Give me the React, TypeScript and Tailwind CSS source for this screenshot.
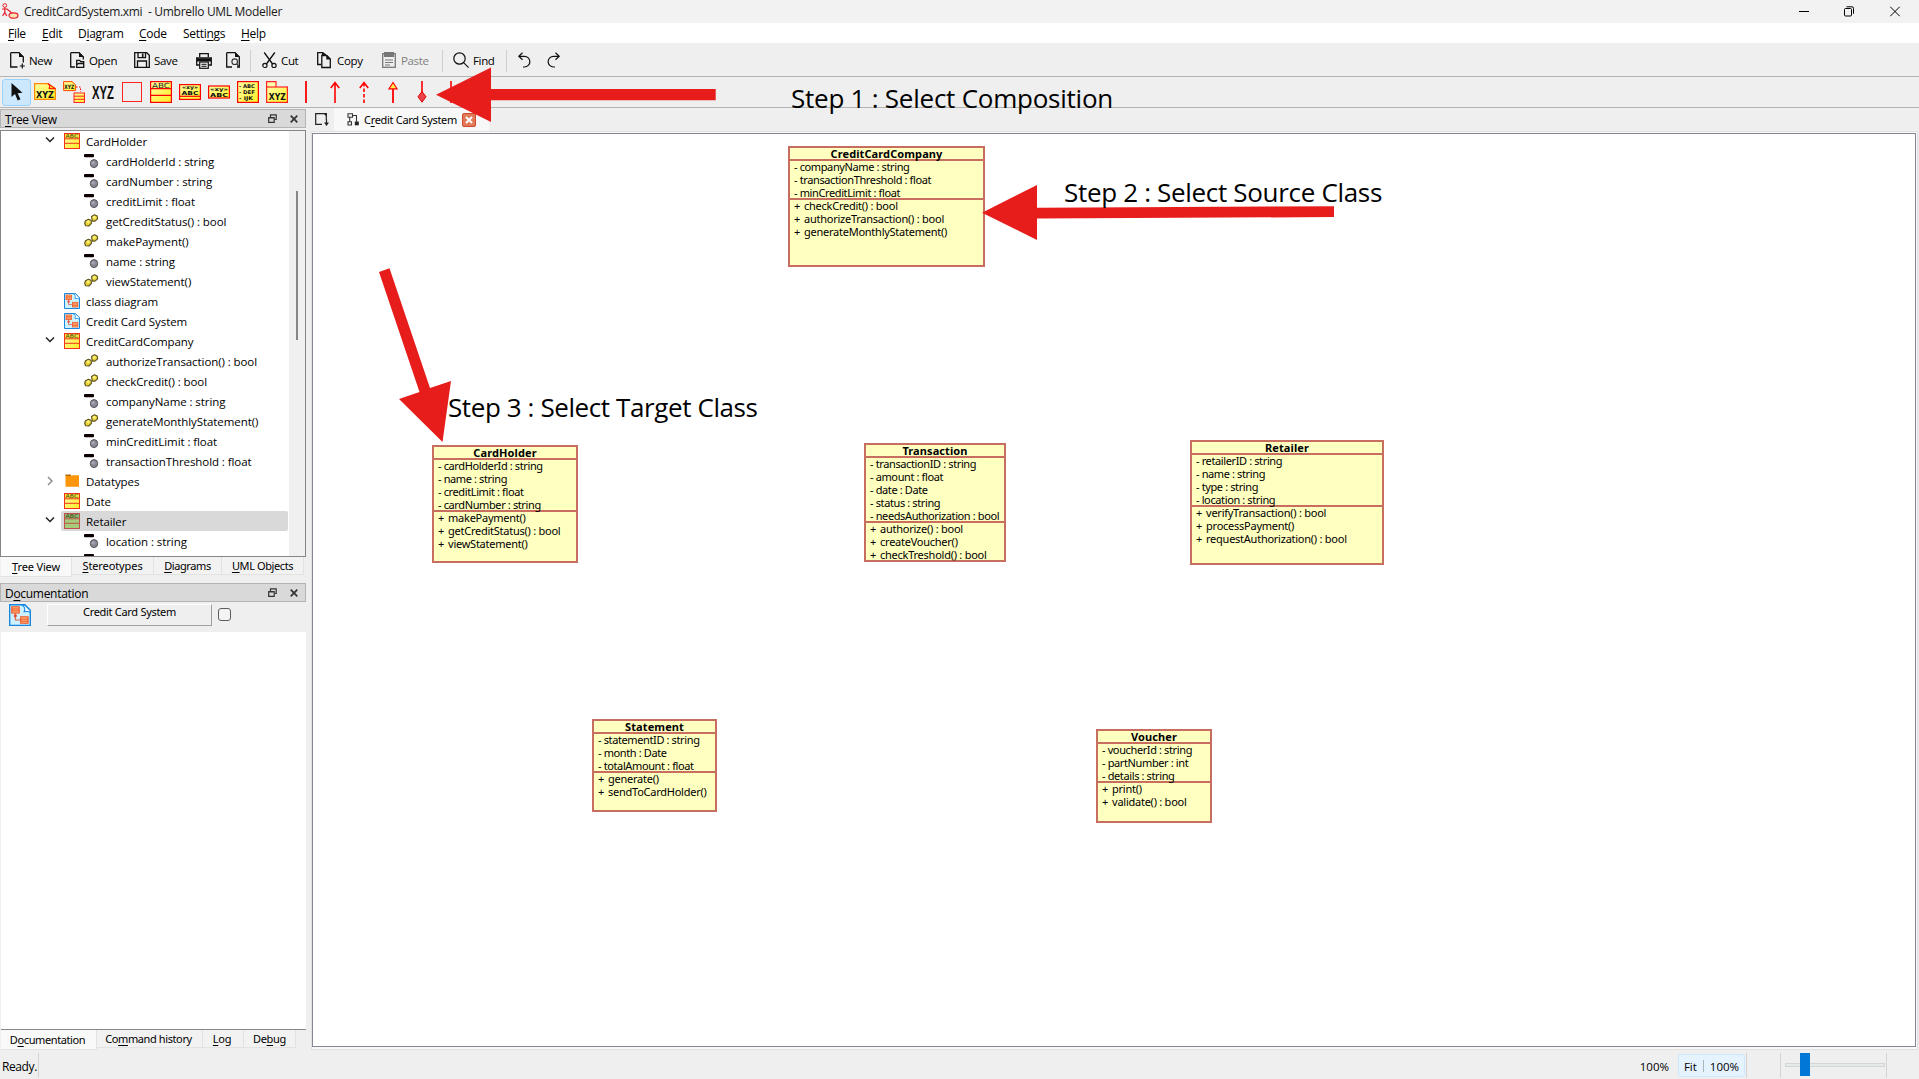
import type { ReactNode } from "react";

const UI = "font-['Open_Sans',sans-serif] text-[11.5px]";

/* ---------- small icons ---------- */

function Svg({ w, h, children, className = "" }: { w: number; h: number; children: ReactNode; className?: string }) {
  return (
    <svg width={w} height={h} viewBox={`0 0 ${w} ${h}`} fill="none" className={`block shrink-0 overflow-visible ${className}`}>
      {children}
    </svg>
  );
}

const Gradient = () => (
  <defs>
    <linearGradient id="yel" x1="0" y1="0" x2="1" y2="1">
      <stop offset="0" stopColor="#ffffa8" />
      <stop offset="1" stopColor="#ffee20" />
    </linearGradient>
  </defs>
);

function ClassIcon({ size = 16, selected = false }: { size?: number; selected?: boolean }) {
  const line = selected ? "#c0504a" : "#f5331c";
  return (
    <svg width={size} height={size} viewBox="0 0 16 16" className="block shrink-0">
      <rect x=".5" y=".5" width="15" height="15" fill={selected ? "#a5cd7c" : "url(#yel)"} stroke={line} />
      <rect x="1" y="1" width="14" height="4.5" fill={selected ? "#8cb878" : "#f2dc3a"} />
      <path d="M.5 5.8h15M.5 10.3h15" stroke={line} strokeWidth="1" />
      <text x="8" y="4.9" textAnchor="middle" fontSize="5.6" fontFamily="DejaVu Sans" textLength="13" lengthAdjust="spacingAndGlyphs" fill="#4a4410">ABC</text>
    </svg>
  );
}

function ToolClassIcon() {
  return (
    <Svg w={22} h={22}>
      <rect x=".6" y=".6" width="20.8" height="20.8" fill="url(#yel)" stroke="#f00" strokeWidth="1.2" />
      <path d="M.5 7.6h21M.5 14.4h21" stroke="#f00" strokeWidth="1.2" />
      <text x="11" y="6.7" textAnchor="middle" fontSize="7" fontFamily="DejaVu Sans" textLength="18" lengthAdjust="spacingAndGlyphs" fill="#222">ABC</text>
    </Svg>
  );
}

function DiagramIcon({ size = 16 }: { size?: number }) {
  return (
    <svg width={size} height={size} viewBox="0 0 16 16" className="block shrink-0">
      <path d="M.5.5h11l4 4v11H.5z" fill="#cdf2fd" stroke="#1787e0" />
      <path d="M9.5.8l2 0 4 4v1.2q-1.5-.8-4.500-.4 1.500-3-1.500-4.800z" fill="#fff" stroke="#1787e0" strokeWidth=".8" />
      <rect x="2" y="2" width="5.400" height="4.600" fill="#ffb27a" stroke="#ef5a2d" strokeWidth=".8" />
      <path d="M2 3.600h5.400M2 5h5.400" stroke="#ef5a2d" strokeWidth=".7" />
      <path d="M4.600 6.600v5h4" stroke="#e0604a" strokeWidth=".8" fill="none" />
      <circle cx="4.600" cy="8.600" r="1.200" fill="#ef4a2d" />
      <rect x="8.500" y="9.300" width="5.400" height="4.700" fill="#ffb27a" stroke="#ef5a2d" strokeWidth=".8" />
      <path d="M8.500 11h5.400M8.500 12.500h5.400" stroke="#ef5a2d" strokeWidth=".7" />
    </svg>
  );
}

const AttrIcon = () => (
  <Svg w={16} h={20}>
    <rect x="0" y="3" width="10" height="3.200" rx="1" fill="#0c0000" />
    <ellipse cx="10" cy="12.600" rx="3.700" ry="4" fill="#8b8894" stroke="#56545c" strokeWidth="1" />
    <ellipse cx="9.200" cy="11.800" rx="1.800" ry="1.600" fill="#a6a3b2" />
  </Svg>
);

const OpIcon = () => (
  <Svg w={16} h={20}>
    <path d="M7.500 5.500l3-1.700 2.700 1.200.4 2.800-2.600 2.300-2.600 0z" fill="#e8cf35" stroke="#5a5220" strokeWidth="1.100" strokeLinejoin="round" />
    <path d="M1.300 10l3-1.700 2.800 1 .4 3-2.700 2.700-3.200-.3-.9-2.200z" fill="#e8cf35" stroke="#5a5220" strokeWidth="1.100" strokeLinejoin="round" />
    <circle cx="10.300" cy="6.300" r="1.500" fill="#fff27a" />
    <circle cx="4.200" cy="10.800" r="1.500" fill="#fff27a" />
  </Svg>
);

const FolderIcon = () => (
  <Svg w={16} h={16}>
    <path d="M1.500 1.500h5.500v2h-5.500z" fill="#b06a10" />
    <path d="M1.500 3h5.500l1-.8h7v11.600h-13.500z" fill="#fb960a" />
  </Svg>
);

const pg = "M.7.7h8.300l4.300 4.300";

const NewIcon = () => (
  <Svg w={16} h={17}>
    <path d={`${pg}v5.500M7.500 15H.7V.7`} stroke="#111" strokeWidth="1.300" />
    <path d="M9 0v5h5z" fill="#111" />
    <path d="M12.300 11.500v5M9.800 14h5" stroke="#111" strokeWidth="1.200" />
  </Svg>
);
const OpenIcon = () => (
  <Svg w={16} h={17}>
    <path d={`${pg}v2.500M5 15H.7V.7`} stroke="#111" strokeWidth="1.300" />
    <path d="M9 0v5h5z" fill="#111" />
    <path d="M6.700 15.400v-7h3l1 1.200h3v5.800zM7 12.500l1.500-1h5" stroke="#111" strokeWidth="1.300" />
  </Svg>
);
const SaveIcon = () => (
  <Svg w={16} h={17}>
    <path d="M.7.700h12l2.600 2.600v12H.7zM4 .7v5h7.500v-5M3.500 15.300V9h9v6.300" stroke="#111" strokeWidth="1.300" />
    <path d="M8.700 1.500v3.500" stroke="#111" strokeWidth="1.600" />
  </Svg>
);
const PrintIcon = () => (
  <Svg w={16} h={16}>
    <path d="M3.700 4V.7h8.600V4M3.500 12H.7V5h14.600v7h-2.800" stroke="#111" strokeWidth="1.300" />
    <path d="M1 5.500h14v3H1z" fill="#111" />
    <rect x="3.700" y="9" width="8.600" height="6.300" fill="#efefef" stroke="#111" strokeWidth="1.200" />
    <path d="M5.500 11.300h5M5.500 13.300h5" stroke="#111" />
  </Svg>
);
const PreviewIcon = () => (
  <Svg w={16} h={17}>
    <path d={`${pg}v10H11M6 15H.7V.7`} stroke="#111" strokeWidth="1.300" />
    <path d="M9 0v5h5z" fill="#111" />
    <circle cx="8.700" cy="9.700" r="2.800" stroke="#333" strokeWidth="1.100" />
    <path d="M10.700 11.900l3 3.600" stroke="#333" strokeWidth="1.200" />
  </Svg>
);
const CutIcon = () => (
  <Svg w={15} h={17}>
    <path d="M2.200.500l8.400 11.500M12.800.500L4.400 12" stroke="#111" strokeWidth="1.300" />
    <circle cx="2.900" cy="13.400" r="2.100" stroke="#111" strokeWidth="1.200" />
    <circle cx="12" cy="13.400" r="2.100" stroke="#111" strokeWidth="1.200" />
  </Svg>
);
const CopyIcon = () => (
  <Svg w={15} h={17}>
    <path d="M4 12.500H.7V.7h5l3 2M4.800 3.500h5l3.500 3.500v8.500H4.800z" stroke="#111" strokeWidth="1.300" />
    <path d="M5 .3l3.500 2.800H5zM9.300 3v4.500h4.500z" fill="#111" />
  </Svg>
);
const PasteIcon = () => (
  <Svg w={15} h={17}>
    <rect x=".7" y="1.700" width="12.600" height="13.600" stroke="#777" strokeWidth="1.300" />
    <path d="M2 0h10v5H2z" fill="#777" />
    <path d="M3 8h8M3 10.500h8M3 13h5" stroke="#777" strokeWidth="1.100" />
  </Svg>
);
const FindIcon = () => (
  <Svg w={17} h={17}>
    <circle cx="6.500" cy="6.500" r="5.700" stroke="#111" strokeWidth="1.200" />
    <path d="M10.600 10.600l5 5" stroke="#111" strokeWidth="1.200" />
  </Svg>
);
const UndoIcon = () => (
  <Svg w={13} h={17}>
    <path d="M4.500.800L.8 4.300l3.700 3.500M1 4.300h5.500a5.300 5.300 0 0 1 0 10.700H5" stroke="#111" strokeWidth="1.200" />
  </Svg>
);
const RedoIcon = () => (
  <Svg w={13} h={17} className="-scale-x-100">
    <path d="M4.500.800L.8 4.300l3.700 3.500M1 4.300h5.500a5.300 5.300 0 0 1 0 10.700H5" stroke="#111" strokeWidth="1.200" />
  </Svg>
);

/* ---------- bars ---------- */

/* Label with its mnemonic letter underlined */
function Mn({ t, i }: { t: string; i: number }) {
  return (
    <span className="whitespace-pre">
      {t.slice(0, i)}
      <span className="underline decoration-1 underline-offset-2">{t[i]}</span>
      {t.slice(i + 1)}
    </span>
  );
}

function TitleBar() {
  return (
    <div className="flex h-[23px] items-center bg-[#f2f2f2] pl-[2px]">
      <Svg w={17} h={17}>
        <circle cx="2.800" cy="2.500" r="1.900" stroke="#e8202a" />
        <path d="M2.800 4.400v5M0 6h5.500M2.800 9.400L.6 13M2.800 9.400l2 3.600M5 6l6 5" stroke="#e8202a" strokeWidth="1.200" />
        <ellipse cx="11.500" cy="12.500" rx="4.500" ry="2.700" fill="#fbe3b4" stroke="#e8202a" strokeWidth="1.200" />
      </Svg>
      <span className="ml-[5px] whitespace-pre pt-px text-[12px] tracking-[-0.3px] text-[#1a1a1a]">CreditCardSystem.xmi  - Umbrello UML Modeller</span>
      <div className="ml-auto flex items-center pr-[19px] text-black">
        <Svg w={10} h={11} className="mr-[35px]"><path d="M0 5.500h10" stroke="currentColor" /></Svg>
        <Svg w={10} h={11} className="mr-[36px]">
          <rect x=".5" y="2.500" width="7" height="7.500" rx="1" stroke="currentColor" />
          <path d="M2.500.8h5.500q1.500 0 1.500 1.500v5.500" stroke="currentColor" />
        </Svg>
        <Svg w={10} h={11}><path d="M.3.800l9.400 9.400M9.700.800L.3 10.200" stroke="currentColor" /></Svg>
      </div>
    </div>
  );
}

function MenuBar() {
  return (
    <div className="flex h-[22px] items-center border-b-2 border-[#f0f0f0] bg-white pl-[8px] pt-[2px] text-[12px] tracking-[-0.3px]">
      <span className="w-[34px]"><Mn t="File" i={0} /></span>
      <span className="w-[36px]"><Mn t="Edit" i={0} /></span>
      <span className="w-[61px]"><Mn t="Diagram" i={1} /></span>
      <span className="w-[44px]"><Mn t="Code" i={0} /></span>
      <span className="w-[58px]"><Mn t="Settings" i={5} /></span>
      <span><Mn t="Help" i={0} /></span>
    </div>
  );
}

function Action({ icon, label, className }: { icon: ReactNode; label?: string; className: string }) {
  return (
    <div className={`flex shrink-0 items-center tracking-[-0.35px] ${className}`}>
      {icon}
      {label && <span className="pt-px">{label}</span>}
    </div>
  );
}

const Sep = ({ className }: { className: string }) => <div className={`h-[22px] w-px shrink-0 bg-[#cfcfcf] ${className}`} />;

function MainToolbar() {
  return (
    <div className="flex h-[32px] items-center border-b border-[#b4b4b4] pl-[10px]">
      <Action className="w-[60px] gap-[3px]" icon={<NewIcon />} label="New" />
      <Action className="w-[64px] gap-[3px]" icon={<OpenIcon />} label="Open" />
      <Action className="w-[62px] gap-[4px]" icon={<SaveIcon />} label="Save" />
      <Action className="w-[30px]" icon={<PrintIcon />} />
      <Action className="w-[24px]" icon={<PreviewIcon />} />
      <Sep className="mr-[11px]" />
      <Action className="w-[55px] gap-[4px]" icon={<CutIcon />} label="Cut" />
      <Action className="w-[65px] gap-[5px]" icon={<CopyIcon />} label="Copy" />
      <Action className="w-[60px] gap-[4px] text-[#808080]" icon={<PasteIcon />} label="Paste" />
      <Sep className="mr-[10px]" />
      <Action className="w-[53px] gap-[3px]" icon={<FindIcon />} label="Find" />
      <Sep className="mr-[11px]" />
      <Action className="w-[29px]" icon={<UndoIcon />} />
      <Action className="w-[29px]" icon={<RedoIcon />} />
    </div>
  );
}

const Tool = ({ children }: { children: ReactNode }) => (
  <div className="flex h-[27px] w-[29px] shrink-0 items-center justify-center">{children}</div>
);

function DiagramToolbar() {
  const bold = { fontFamily: "DejaVu Sans", fontWeight: 700, lengthAdjust: "spacingAndGlyphs" as const, fill: "#111" };
  return (
    <div className="flex h-[31px] items-center border-b border-[#b4b4b4] pl-[2px]">
      <div className="-mr-px flex h-[27px] w-[29px] items-center justify-center rounded-[3px] border border-[#99d1ff] bg-[#cce8ff]">
        <Svg w={14} h={20}><path d="M1.500 1v14l3.500-3 2.700 6.500 2.800-1.300-2.900-6 4.900-.4z" fill="#111" /></Svg>
      </div>
      <Tool>
        <Svg w={22} h={22}>
          <path d="M.6 2.600h13.400l7.400 5v10.800H.6z" fill="url(#yel)" stroke="#f80" strokeWidth="1.200" />
          <path d="M14 2.600q3 2 1 5l6.400.2z" fill="#f8d020" stroke="#f00" />
          <text x="11" y="16.700" textAnchor="middle" fontSize="9" textLength="18" {...bold}>XYZ</text>
        </Svg>
      </Tool>
      <Tool>
        <Svg w={22} h={22}>
          <path d="M.6 .6h8.400l3.400 3v6H.6z" fill="url(#yel)" stroke="#f40" />
          <text x="6.300" y="8.300" textAnchor="middle" fontSize="6" textLength="10" {...bold}>XYZ</text>
          <path d="M13 6h4.500v5" stroke="#f00" strokeDasharray="1.500 1.500" />
          <rect x="11" y="12" width="10.500" height="9.500" fill="url(#yel)" stroke="#f22" />
          <path d="M11 15.200h10.500M11 18.300h10.500" stroke="#f22" />
        </Svg>
      </Tool>
      <Tool>
        <Svg w={24} h={22}><text x="12" y="17.500" textAnchor="middle" fontSize="18" fontFamily="Liberation Sans" fontWeight={700} textLength="22" lengthAdjust="spacingAndGlyphs" fill="#111">XYZ</text></Svg>
      </Tool>
      <Tool><div className="h-[20px] w-[20px] border border-[#f22]" /></Tool>
      <Tool><ToolClassIcon /></Tool>
      <Tool>
        <Svg w={22} h={22}>
          <rect x=".6" y="3.600" width="20.800" height="14.800" fill="url(#yel)" stroke="#f00" strokeWidth="1.200" />
          <text x="11" y="8.400" textAnchor="middle" fontSize="5" textLength="16" {...bold}>«xy»</text>
          <text x="11" y="14" textAnchor="middle" fontSize="5.500" textLength="17" {...bold}>ABC</text>
          <path d="M.5 15.300h21" stroke="#f00" strokeWidth="1.200" />
        </Svg>
      </Tool>
      <Tool>
        <Svg w={22} h={22}>
          <rect x=".6" y="5" width="20.800" height="12" fill="url(#yel)" stroke="#f00" strokeWidth="1.200" />
          <text x="11" y="9.800" textAnchor="middle" fontSize="5" textLength="18" {...bold}>«xy»</text>
          <text x="11" y="15.700" textAnchor="middle" fontSize="5.500" textLength="18" {...bold}>ABC</text>
        </Svg>
      </Tool>
      <Tool>
        <Svg w={22} h={22}>
          <rect x=".6" y=".6" width="20.800" height="20.800" fill="url(#yel)" stroke="#f00" strokeWidth="1.200" />
          <text x="2" y="6.500" fontSize="5" textLength="16" {...bold}>- ABC</text>
          <text x="2" y="12.700" fontSize="5" textLength="16" {...bold}>- DEF</text>
          <text x="2" y="19" fontSize="5" textLength="14" {...bold}>- IJK</text>
        </Svg>
      </Tool>
      <Tool>
        <Svg w={22} h={22}>
          <path d="M.6 6V.6h9.400V6" fill="#ffffb0" stroke="#f22" strokeWidth="1.200" />
          <rect x=".6" y="6" width="20.800" height="15.400" fill="url(#yel)" stroke="#f22" strokeWidth="1.200" />
          <text x="11.300" y="18.500" textAnchor="middle" fontSize="9.500" textLength="17" {...bold}>XYZ</text>
        </Svg>
      </Tool>
      <Tool><Svg w={22} h={22}><path d="M11 0v22" stroke="#f00" strokeWidth="1.800" /></Svg></Tool>
      <Tool><Svg w={22} h={22}><path d="M11 22V1.500M6.800 7L11 1.500 15.200 7" stroke="#f00" strokeWidth="1.600" /></Svg></Tool>
      <Tool><Svg w={22} h={22}><path d="M11 22V2" stroke="#f00" strokeWidth="1.600" strokeDasharray="3.500 2" /><path d="M6.800 7L11 1.500 15.200 7" stroke="#f00" strokeWidth="1.600" /></Svg></Tool>
      <Tool><Svg w={22} h={22}><path d="M11 22V8" stroke="#f00" strokeWidth="1.800" /><path d="M11 1.500l4 6.300H7z" fill="#ffee50" stroke="#f00" strokeWidth="1.200" /></Svg></Tool>
      <Tool><Svg w={22} h={22}><path d="M11 0v12" stroke="#f00" strokeWidth="1.600" /><path d="M11 10.500l4 5.200-4 5.500-4-5.500z" fill="#f0444c" stroke="#e00000" /></Svg></Tool>
      <Tool><Svg w={22} h={22}><path d="M11 0v22" stroke="#f00" strokeWidth="1.600" /></Svg></Tool>
    </div>
  );
}

/* ---------- docks ---------- */

function DockHeader({ t, i }: { t: string; i: number }) {
  return (
    <div className="flex h-[19px] w-[306px] shrink-0 items-center border border-[#b4b4b4] bg-[#d9d9d9] pl-[4px] pr-[7px] text-[12px] tracking-[-0.3px]">
      <span className="pt-[2px]"><Mn t={t} i={i} /></span>
      <Svg w={9} h={9} className="ml-auto">
        <path d="M2.500 3V.8h5.700v4.700H6.500M2 1h6.700" stroke="#333" strokeWidth="1.200" />
        <path d="M.7 3.500h5.500v4.800H.7zM.5 4h6" stroke="#333" strokeWidth="1.200" />
      </Svg>
      <Svg w={8} h={8} className="ml-[13px]"><path d="M.7.700l6.600 6.600M7.300.700L.7 7.300" stroke="#333" strokeWidth="1.700" /></Svg>
    </div>
  );
}

type Node = { k: "class" | "attr" | "op" | "diagram" | "folder"; t: string; open?: boolean; sel?: boolean };

const nodes: Node[] = [
  { k: "class", t: "CardHolder", open: true },
  { k: "attr", t: "cardHolderId : string" },
  { k: "attr", t: "cardNumber : string" },
  { k: "attr", t: "creditLimit : float" },
  { k: "op", t: "getCreditStatus() : bool" },
  { k: "op", t: "makePayment()" },
  { k: "attr", t: "name : string" },
  { k: "op", t: "viewStatement()" },
  { k: "diagram", t: "class diagram" },
  { k: "diagram", t: "Credit Card System" },
  { k: "class", t: "CreditCardCompany", open: true },
  { k: "op", t: "authorizeTransaction() : bool" },
  { k: "op", t: "checkCredit() : bool" },
  { k: "attr", t: "companyName : string" },
  { k: "op", t: "generateMonthlyStatement()" },
  { k: "attr", t: "minCreditLimit : float" },
  { k: "attr", t: "transactionThreshold : float" },
  { k: "folder", t: "Datatypes", open: false },
  { k: "class", t: "Date" },
  { k: "class", t: "Retailer", open: true, sel: true },
  { k: "attr", t: "location : string" },
  { k: "attr", t: "" },
];

function TreeRow({ n }: { n: Node }) {
  const leaf = n.k === "attr" || n.k === "op";
  return (
    <div className="flex h-[20px] shrink-0 items-center">
      <div className="flex w-[60px] shrink-0 justify-center pl-[38px]">
        {n.open === true && <Svg w={10} h={8} className="-mt-[2px]"><path d="M1 1.500l4 4 4-4" stroke="#222" strokeWidth="1.500" /></Svg>}
        {n.open === false && <Svg w={8} h={10}><path d="M2 1l4 4-4 4" stroke="#888" strokeWidth="1.400" /></Svg>}
      </div>
      <div className={`flex h-full items-center rounded-[2px] pl-[3px] ${n.sel ? "w-[227px] bg-[#d9d9d9]" : ""} ${leaf ? "ml-[20px]" : ""}`}>
        {n.k === "class" && <ClassIcon selected={n.sel} />}
        {n.k === "attr" && <AttrIcon />}
        {n.k === "op" && <OpIcon />}
        {n.k === "diagram" && <DiagramIcon />}
        {n.k === "folder" && <FolderIcon />}
        <span className="ml-[6px] whitespace-nowrap pt-[2px] tracking-[-0.08px]">{n.t}</span>
      </div>
    </div>
  );
}

function Tab({ t, i, active = false, className }: { t: string; i: number; active?: boolean; className: string }) {
  return (
    <div className={`flex shrink-0 items-center justify-center border-b border-r border-[#e2e2e2] font-['Noto_Sans',sans-serif] text-[11px] ${active ? "h-[20px] bg-[#f9f9f9] pt-[2px]" : "h-[18px] bg-[#f2f2f2] pt-[2px]"} ${className}`}>
      <Mn t={t} i={i} />
    </div>
  );
}

function LeftDocks() {
  return (
    <div className="flex w-[311px] shrink-0 flex-col pt-px">
      <DockHeader t="Tree View" i={0} />
      <div className="mt-[2px] flex h-[427px] w-[306px] shrink-0 border border-[#868686] bg-white">
        <div className="flex min-w-0 flex-1 flex-col overflow-hidden">
          {nodes.map((n, k) => <TreeRow key={k} n={n} />)}
        </div>
        <div className="flex w-[16px] shrink-0 justify-center bg-[#f0f0f0] pt-[60px]">
          <div className="h-[149px] w-[2px] bg-[#868686]" />
        </div>
      </div>
      <div className="flex h-[26px] shrink-0 items-start pl-px">
        <Tab t="Tree View" i={0} active className="w-[71px] tracking-[-0.15px]" />
        <Tab t="Stereotypes" i={0} className="w-[82px] tracking-[-0.1px]" />
        <Tab t="Diagrams" i={0} className="w-[68px] tracking-[-0.4px]" />
        <Tab t="UML Objects" i={0} className="w-[82px] tracking-[-0.4px]" />
      </div>
      <DockHeader t="Documentation" i={1} />
      <div className="flex h-[30px] shrink-0 items-start pl-[9px] pt-[2px]">
        <DiagramIcon size={22} />
        <div className="ml-[16px] flex h-[22px] w-[165px] justify-center border border-b-[#a0a0a0] border-l-white border-r-[#a0a0a0] border-t-white font-['Noto_Sans',sans-serif] text-[11px] leading-[14px] tracking-[-0.3px]">Credit Card System</div>
        <div className="ml-[6px] mt-[4px] h-[13px] w-[13px] rounded-[3px] border border-[#5c5c5c] bg-[#f4f4f4]" />
      </div>
      <div className="ml-px h-[398px] w-[305px] shrink-0 border-b border-[#868686] bg-white" />
      <div className="flex items-start pl-px">
        <Tab t="Documentation" i={1} active className="w-[96px] pr-[2px] tracking-[-0.4px]" />
        <Tab t="Command history" i={2} className="w-[106px] pr-[2px] tracking-[-0.4px]" />
        <Tab t="Log" i={0} className="w-[41px] pr-[2px] tracking-[-0.3px]" />
        <Tab t="Debug" i={2} className="w-[52px] tracking-[-0.3px]" />
      </div>
    </div>
  );
}

/* ---------- canvas ---------- */

type Uml = { name: string; box: string; attrs: string[]; ops: string[] };

const classes: Uml[] = [
  { name: "CreditCardCompany", box: "left-[475px] top-[12px] w-[197px] h-[121px]", attrs: ["companyName : string", "transactionThreshold : float", "minCreditLimit : float"], ops: ["checkCredit() : bool", "authorizeTransaction() : bool", "generateMonthlyStatement()"] },
  { name: "CardHolder", box: "left-[119px] top-[311px] w-[146px] h-[118px]", attrs: ["cardHolderId : string", "name : string", "creditLimit : float", "cardNumber : string"], ops: ["makePayment()", "getCreditStatus() : bool", "viewStatement()"] },
  { name: "Transaction", box: "left-[551px] top-[309px] w-[142px] h-[119px]", attrs: ["transactionID : string", "amount : float", "date : Date", "status : string", "needsAuthorization : bool"], ops: ["authorize() : bool", "createVoucher()", "checkTreshold() : bool"] },
  { name: "Retailer", box: "left-[877px] top-[306px] w-[194px] h-[125px]", attrs: ["retailerID : string", "name : string", "type : string", "location : string"], ops: ["verifyTransaction() : bool", "processPayment()", "requestAuthorization() : bool"] },
  { name: "Statement", box: "left-[279px] top-[585px] w-[125px] h-[93px]", attrs: ["statementID : string", "month : Date", "totalAmount : float"], ops: ["generate()", "sendToCardHolder()"] },
  { name: "Voucher", box: "left-[783px] top-[595px] w-[116px] h-[94px]", attrs: ["voucherId : string", "partNumber : int", "details : string"], ops: ["print()", "validate() : bool"] },
];

function UmlClass({ c }: { c: Uml }) {
  return (
    <div className={`absolute border-2 border-[#c86e60] bg-[#ffffc0] font-['Noto_Sans',sans-serif] text-[11px] leading-[11px] ${c.box}`}>
      <div className="h-[13px] border-b-2 border-[#c86e60] text-center font-bold leading-[12px] tracking-[0.1px]">{c.name}</div>
      <div className="border-b-2 border-[#c86e60] pl-[4px] tracking-[-0.38px]">
        {c.attrs.map((a, k) => <div key={a} className={`whitespace-nowrap ${k === c.attrs.length - 1 ? "h-[11px]" : "h-[13px]"}`}>- {a}</div>)}
      </div>
      <div className="pl-[4px] tracking-[-0.25px]">
        {c.ops.map((o) => <div key={o} className="flex h-[13px] gap-[4px] whitespace-nowrap"><span>+</span><span>{o}</span></div>)}
      </div>
    </div>
  );
}

function DiagramArea() {
  return (
    <div className="flex min-w-0 flex-1 flex-col">
      <div className="flex h-[23px] shrink-0 items-center pl-[4px]">
        <Svg w={15} h={15}>
          <path d="M11.300 8V1.700H.7v10.600H7" stroke="#222" strokeWidth="1.200" />
          <path d="M8 1h4v4zM9 10.500h5L11.500 14z" fill="#222" />
          <path d="M11.500 7.500v4" stroke="#222" strokeWidth="1.200" />
        </Svg>
        <div className="ml-[4px] flex h-full w-[155px] items-center bg-[#f8f8f8] pl-[13px]">
          <Svg w={12} h={13}>
            <path d="M1 .7h4.500v3.600H1zM1 8.700h3.500v3.300H1zM2.700 4.300v4.400M5.500 2.500H9.500v6" stroke="#333" strokeWidth="1.100" />
            <path d="M7.800 8.500h4v3.800h-4z" fill="#222" />
          </Svg>
          <span className="ml-[5px] w-[93px] whitespace-nowrap pt-[2px] font-['Noto_Sans',sans-serif] text-[11px] tracking-[-0.3px]"><Mn t="Credit Card System" i={1} /></span>
          <span className="ml-[5px] flex h-[14px] w-[14px] items-center justify-center rounded-[2px] border border-[#d04a2c] bg-[#e07a5a]">
            <Svg w={8} h={8}><path d="M1 1l6 6M7 1L1 7" stroke="#fff" strokeWidth="1.900" /></Svg>
          </span>
        </div>
      </div>
      <div className="mr-px flex flex-1 border border-[#e0e0e0] bg-[#f8f8f8] pb-[2px] pr-px pt-px">
        <div className="relative flex-1 overflow-hidden border border-[#868695] bg-white">
          {classes.map((c) => <UmlClass key={c.name} c={c} />)}
        </div>
      </div>
    </div>
  );
}

function StatusBar() {
  return (
    <div className="flex h-[29px] shrink-0 items-center pl-[2px] pt-[2px]">
      <span className="w-[36px] pt-[2px] text-[12px] tracking-[-0.4px]">Ready.</span>
      <div className="h-[25px] w-px bg-[#d4d4d4]" />
      <span className="ml-auto pt-[2px]">100%</span>
      <div className="ml-[9px] flex h-[23px] w-[67px] items-center justify-center gap-[6px] rounded-[3px] border border-[#cce8ff] bg-[#e5f3ff]">
        <span className="pt-[2px]">Fit</span>
        <span className="h-[12px] w-px bg-[#aab4bc]" />
        <span className="pt-[2px]">100%</span>
      </div>
      <div className="ml-px h-[25px] w-px bg-[#d4d4d4]" />
      <div className="ml-[33px] h-[25px] w-px bg-[#d4d4d4]" />
      <div className="relative -mt-px ml-[4px] h-[4px] w-[100px] border border-[#d2d6d6] bg-[#e7eaea]">
        <div className="absolute -top-[11px] left-[14px] h-[23px] w-[10px] bg-[#0078d7]" />
      </div>
      <div className="ml-[1px] mr-[32px] h-[25px] w-px bg-[#d4d4d4]" />
    </div>
  );
}

/* ---------- tutorial annotations laid over the window ---------- */

function Annotations() {
  return (
    <div className="pointer-events-none absolute inset-0 text-[26px] leading-[36px] text-black">
      <svg width="1919" height="1079" viewBox="0 0 1919 1079" className="absolute inset-0" fill="#e71d1c">
        <path d="M436 94.700L491 67.500V89h224.700v11.200H491V122z" />
        <path d="M982 212.700L1037 185v22.800l297-1.600v10.900l-297 1.300V240z" />
        <path d="M379 272l10.500-3.800L430 388l21-7-8.500 61L399 399l20.500-7z" />
      </svg>
      <span className="absolute left-[791px] top-[80px] whitespace-nowrap tracking-[-0.24px]">Step 1 : Select Composition</span>
      <span className="absolute left-[1064px] top-[174px] whitespace-nowrap tracking-[-0.32px]">Step 2 : Select Source Class</span>
      <span className="absolute left-[448px] top-[389px] whitespace-nowrap tracking-[-0.4px]">Step 3 : Select Target Class</span>
    </div>
  );
}

export default function App() {
  return (
    <div className={`relative flex h-[1079px] w-[1919px] flex-col overflow-hidden bg-[#efefef] text-black ${UI}`}>
      <svg width="0" height="0" className="absolute"><Gradient /></svg>
      <TitleBar />
      <MenuBar />
      <MainToolbar />
      <DiagramToolbar />
      <div className="flex min-h-0 flex-1">
        <LeftDocks />
        <DiagramArea />
      </div>
      <StatusBar />
      <Annotations />
    </div>
  );
}
